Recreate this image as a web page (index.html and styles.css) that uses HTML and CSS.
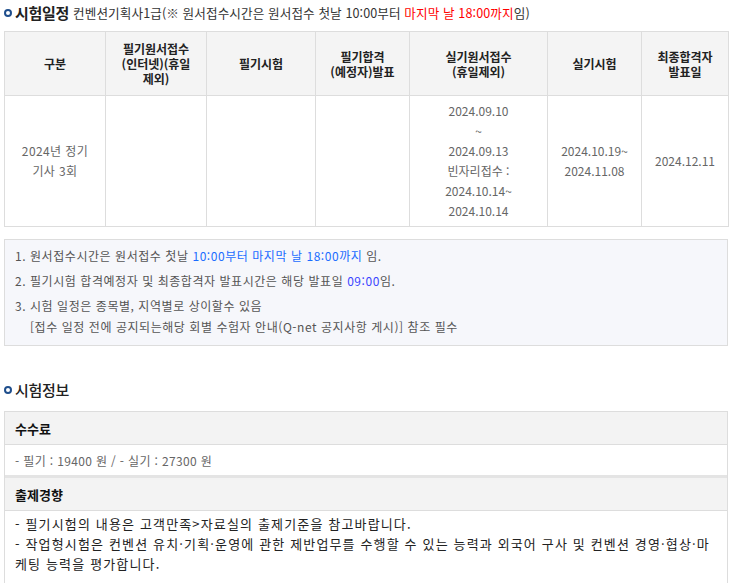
FILE: index.html
```html
<!DOCTYPE html>
<html lang="ko">
<head>
<meta charset="utf-8">
<link rel="stylesheet" href="styles.css">
</head>
<body>
<div class="page">
  <h3 class="sec-title"><span class="dot"></span><span class="sec-main">시험일정</span> <span class="sec-sub">컨벤션기획사1급(※ 원서접수시간은 원서접수 첫날 10:00부터 <span class="red">마지막 날 18:00까지</span>임)</span></h3>

  <table class="sched">
    <colgroup>
      <col class="c1"><col class="c2"><col class="c3"><col class="c4"><col class="c5"><col class="c6"><col class="c7">
    </colgroup>
    <thead>
      <tr>
        <th>구분</th>
        <th>필기원서접수<br>(인터넷)(휴일<br>제외)</th>
        <th>필기시험</th>
        <th>필기합격<br>(예정자)발표</th>
        <th>실기원서접수<br>(휴일제외)</th>
        <th>실기시험</th>
        <th>최종합격자<br>발표일</th>
      </tr>
    </thead>
    <tbody>
      <tr>
        <td class="first">2024년 정기<br>기사 3회</td>
        <td></td>
        <td></td>
        <td></td>
        <td>2024.09.10<br>~<br>2024.09.13<br>빈자리접수 :<br>2024.10.14~<br>2024.10.14</td>
        <td>2024.10.19~<br>2024.11.08</td>
        <td>2024.12.11</td>
      </tr>
    </tbody>
  </table>

  <ol class="notice">
    <li>1. 원서접수시간은 원서접수 첫날 <span class="blue">10:00부터 마지막 날 18:00까지</span> 임.</li>
    <li>2. 필기시험 합격예정자 및 최종합격자 발표시간은 해당 발표일 <span class="blue2">09:00</span>임.</li>
    <li>3. 시험 일정은 종목별, 지역별로 상이할수 있음<br><span class="indent">[접수 일정 전에 공지되는해당 회별 수험자 안내(Q-net 공지사항 게시)] 참조 필수</span></li>
  </ol>

  <h3 class="sec-title sec2"><span class="dot"></span><span class="sec-main2">시험정보</span></h3>

  <div class="info">
    <div class="info-block">
      <div class="info-head">수수료</div>
      <div class="info-body fee">- 필기 : 19400 원 / - 실기 : 27300 원</div>
    </div>
    <div class="info-block">
      <div class="info-head">출제경향</div>
      <div class="info-body trend">- 필기시험의 내용은 고객만족&gt;자료실의 출제기준을 참고바랍니다.<br>- 작업형시험은 컨벤션 유치·기획·운영에 관한 제반업무를 수행할 수 있는 능력과 외국어 구사 및 컨벤션 경영·협상·마케팅 능력을 평가합니다.</div>
    </div>
  </div>
</div>
</body>
</html>
```

FILE: styles.css
```css
html, body {
  margin: 0;
  padding: 0;
  background: #fff;
}
body {
  font-family: "Noto Sans CJK KR", "Noto Sans", sans-serif;
  color: #333;
}
.page {
  padding: 0 4px;
}
.sec-title {
  margin: 0;
  height: 24px;
  display: flex;
  align-items: center;
  font-weight: normal;
  white-space: nowrap;
}
.dot {
  width: 4px;
  height: 4px;
  border: 2px solid #1f4e8c;
  border-radius: 50%;
  margin-right: 3px;
  margin-top: 1px;
  flex: none;
}
.sec-main {
  font-size: 15px;
  font-weight: 700;
  color: #222;
  letter-spacing: -0.3px;
}
.sec-sub {
  font-size: 12.6px;
  color: #333;
  margin-left: 4px;
  margin-top: 1px;
  letter-spacing: 0.1px;
}
.red { color: #ff0000; }
.blue { color: #1a6cff; }
.blue2 { color: #3b45ff; }

.sched {
  margin-top: 7px;
  width: 724px;
  border-collapse: collapse;
  table-layout: fixed;
  border: 1px solid #dddddd;
}
.c1 { width: 101px; }
.c2 { width: 101px; }
.c3 { width: 109px; }
.c4 { width: 94px; }
.c5 { width: 138px; }
.c6 { width: 94px; }
.c7 { width: 87px; }
.sched th, .sched td {
  border: 1px solid #dddddd;
  text-align: center;
  vertical-align: middle;
  padding: 0;
}
.sched th {
  height: 63px;
  background: #f4f4f4;
  font-size: 12px;
  font-weight: 700;
  line-height: 15px;
  color: #222;
}
.sched td {
  height: 130px;
  font-size: 12px;
  line-height: 20px;
  color: #666;
}
.sched td.first {
  letter-spacing: 0.4px;
}

.notice {
  list-style: none;
  margin: 12px 0 0;
  padding: 5px 10px 8px;
  background: #f6f7fb;
  border: 1px solid #dddddd;
  font-size: 12px;
  letter-spacing: 0.55px;
  color: #555;
  line-height: 21px;
}
.notice li + li {
  margin-top: 4px;
}
.indent {
  padding-left: 15px;
}

.sec2 {
  margin-top: 31px;
}
.sec-main2 {
  font-size: 15px;
  font-weight: 500;
  color: #222;
  letter-spacing: -0.3px;
}
.info {
  margin-top: 10px;
  border: 1px solid #dddddd;
  border-bottom: none;
}
.info-block + .info-block {
  border-top: 3px solid #e4e4e4;
}
.info-head {
  height: 32px;
  display: flex;
  align-items: center;
  padding-left: 10px;
  background: #f3f3f3;
  border-bottom: 1px solid #dddddd;
  font-size: 13px;
  font-weight: 700;
  color: #111;
}
.info-body {
  padding-left: 10px;
  padding-right: 10px;
}
.fee {
  height: 30px;
  display: flex;
  align-items: center;
  font-size: 12px;
  letter-spacing: 0.35px;
  color: #666;
}
.trend {
  padding-top: 3px;
  padding-bottom: 20px;
  font-size: 13px;
  line-height: 20px;
  letter-spacing: 1.15px;
  color: #222;
}
```
